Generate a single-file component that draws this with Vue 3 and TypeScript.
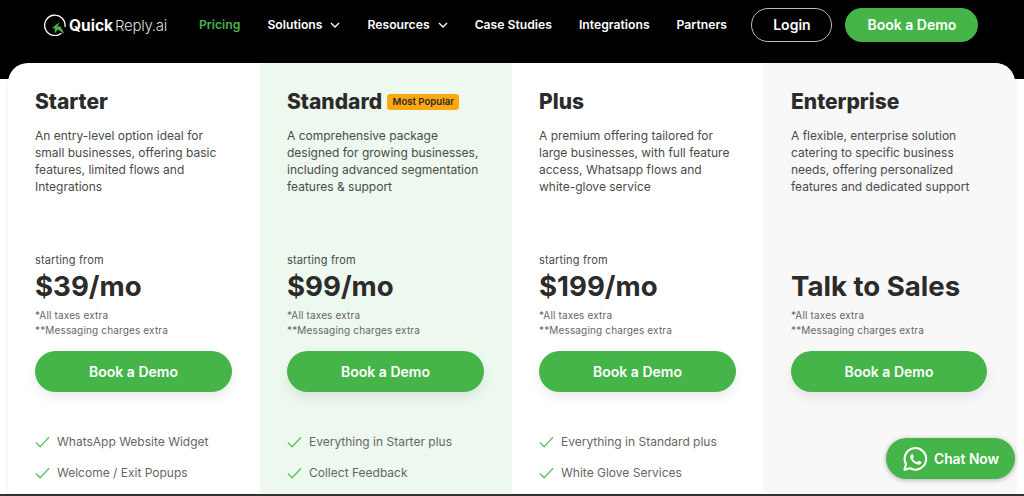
<script setup lang="ts">
interface Plan {
  name: string
  desc: string[]
  from: boolean
  price: string
  features: string[]
  tone: string
  badge?: string
}

const plans: Plan[] = [
  {
    name: 'Starter',
    desc: ['An entry-level option ideal for', 'small businesses, offering basic', 'features, limited flows and', 'Integrations'],
    from: true,
    price: '$39/mo',
    features: ['WhatsApp Website Widget', 'Welcome / Exit Popups'],
    tone: 'white',
  },
  {
    name: 'Standard',
    badge: 'Most Popular',
    desc: ['A comprehensive package', 'designed for growing businesses,', 'including advanced segmentation', 'features & support'],
    from: true,
    price: '$99/mo',
    features: ['Everything in Starter plus', 'Collect Feedback'],
    tone: 'green',
  },
  {
    name: 'Plus',
    desc: ['A premium offering tailored for', 'large businesses, with full feature', 'access, Whatsapp flows and', 'white-glove service'],
    from: true,
    price: '$199/mo',
    features: ['Everything in Standard plus', 'White Glove Services'],
    tone: 'white',
  },
  {
    name: 'Enterprise',
    desc: ['A flexible, enterprise solution', 'catering to specific business', 'needs, offering personalized', 'features and dedicated support'],
    from: false,
    price: 'Talk to Sales',
    features: [],
    tone: 'grey',
  },
]

const navItems = [
  { label: 'Pricing', active: true },
  { label: 'Solutions', caret: true },
  { label: 'Resources', caret: true },
  { label: 'Case Studies' },
  { label: 'Integrations' },
  { label: 'Partners' },
]
</script>

<template>
  <div class="page">
    <header class="topbar">
      <div class="logo">
        <svg class="logo-mark" viewBox="0 0 22 22" width="22" height="22">
          <path d="M17 19.500A10.200 10.200 0 1 1 21 12.500" fill="none" stroke="#fff" stroke-width="1.300" stroke-linecap="round" />
          <path d="M15.500 8 L8 14 L11 14.500 L10.500 19.500 L14 15.500 L20.500 20 L16.500 12.500 L13.500 12.500 Z" fill="#46b549" />
        </svg>
        <span class="logo-bold">Quick</span><span class="logo-light">Reply.ai</span>
      </div>
      <nav class="nav">
        <a v-for="item in navItems" :key="item.label" class="nav-item" :class="{ active: item.active }">
          {{ item.label }}
          <svg v-if="item.caret" class="caret" viewBox="0 0 10 6" width="10" height="6">
            <path d="M1 1l4 4 4-4" fill="none" stroke="#fff" stroke-width="1.300" />
          </svg>
        </a>
      </nav>
      <button class="login">Login</button>
      <button class="demo-top">Book a Demo</button>
    </header>

    <main class="pricing">
      <section v-for="plan in plans" :key="plan.name" class="plan" :class="plan.tone">
        <h2 class="plan-name">
          {{ plan.name }}
          <span v-if="plan.badge" class="badge">{{ plan.badge }}</span>
        </h2>
        <p class="desc">
          <span v-for="line in plan.desc" :key="line">{{ line }}</span>
        </p>
        <div class="from">{{ plan.from ? 'starting from' : '' }}</div>
        <div class="price">{{ plan.price }}</div>
        <div class="notes">
          <span>*All taxes extra</span>
          <span>**Messaging charges extra</span>
        </div>
        <button class="demo">Book a Demo</button>
        <ul class="features">
          <li v-for="f in plan.features" :key="f">
            <svg viewBox="0 0 16 12" width="15" height="12">
              <path d="M1 6.500l4.500 4.500L15 1" fill="none" stroke="#5cbf60" stroke-width="1.400" />
            </svg>
            {{ f }}
          </li>
        </ul>
      </section>
    </main>

    <div class="bottom-strip"></div>

    <button class="chat">
      <svg viewBox="0 0 28 28" width="26" height="26">
        <path d="M2.600 25.600l1.700-6.100A11.600 11.600 0 1 1 8.700 23.900Z" fill="none" stroke="#fff" stroke-width="2.200" stroke-linejoin="round" />
        <path d="M10.400 7.900c-.4 0-.9.1-1.300.6-.5.6-1.300 1.600-1.300 3.100 0 1.800 1.300 3.600 1.500 3.800.2.300 2.600 4.100 6.400 5.600 3.100 1.200 3.800 1 4.400.9.700-.1 2.200-.9 2.500-1.800.300-.8.300-1.600.2-1.700-.1-.2-.3-.3-.7-.5l-2.600-1.200c-.3-.1-.6-.2-.8.200l-1.200 1.500c-.2.200-.4.300-.8.100-.4-.2-1.600-.6-3.100-1.900-1.100-1-1.900-2.300-2.100-2.700-.2-.4 0-.6.200-.8l.6-.7c.2-.2.200-.4.400-.6.100-.3 0-.5 0-.7L11.900 8.800c-.3-.8-.7-.9-1.500-.9Z" fill="#fff" transform="translate(2.500 2.500) scale(.8)" />
      </svg>
      Chat Now
    </button>
  </div>
</template>

<style>
html,
body {
  margin: 0;
  background: #fff;
  overflow: hidden;
}
</style>

<style scoped>
.page {
  position: relative;
  width: 1024px;
  height: 496px;
  overflow: hidden;
  font-family: Inter, 'Liberation Sans', sans-serif;
  color: #2b2b2b;
}
.topbar {
  display: flex;
  align-items: flex-start;
  height: 79px;
  box-sizing: border-box;
  padding: 8px 0 0 44px;
  background: #000;
}
.logo {
  display: flex;
  align-items: center;
  width: 155px;
  height: 34px;
  font-size: 15.500px;
  color: #fff;
}
.logo-mark {
  margin-right: 3px;
}
.logo-bold {
  font-weight: 700;
  margin-right: 2px;
}
.logo-light {
  font-weight: 300;
  color: #ddd;
  font-size: 15px;
  letter-spacing: -0.3px;
}
.nav {
  display: flex;
  gap: 27px;
  height: 32px;
  align-items: center;
}
.nav-item {
  display: flex;
  align-items: center;
  gap: 8px;
  font-size: 12.200px;
  font-weight: 600;
  color: #fff;
  white-space: nowrap;
}
.nav-item.active {
  color: #46b549;
}
.caret {
  margin: 1px 0 0 0;
}
.login,
.demo-top {
  font-family: inherit;
  font-weight: 600;
  height: 34px;
  border-radius: 17px;
  color: #fff;
  font-size: 14px;
  padding: 0 0 2px;
}
.login {
  width: 81px;
  margin-left: 24.500px;
  background: transparent;
  border: 1px solid #bbb;
}
.demo-top {
  width: 133px;
  margin-left: 13px;
  background: #46b549;
  border: none;
}
.pricing {
  display: grid;
  grid-template-columns: 252px 252px 251px 252px;
  width: 1007px;
  height: 430px;
  margin: -16px 0 0 8px;
  border-radius: 20px 20px 0 0;
  overflow: hidden;
  background: #fff;
  box-shadow: 0 0 4px rgba(0, 0, 0, 0.08);
}
.plan {
  box-sizing: border-box;
  padding: 27px 27px 0;
}
.plan.green {
  background: #edf8ee;
}
.plan.grey {
  padding-left: 28px;
  background: #f8f8f8;
}
.plan-name {
  display: flex;
  align-items: center;
  gap: 5px;
  height: 24px;
  margin: 0;
  font-size: 21px;
  font-weight: 800;
  line-height: 24px;
}
.badge {
  padding: 2px 5.500px;
  border-radius: 3px;
  background: #ffa70f;
  font-size: 9.600px;
  font-weight: 600;
  line-height: 12px;
}
.desc {
  display: flex;
  flex-direction: column;
  height: 125px;
  margin: 13px 0 0;
  font-size: 12px;
  line-height: 17px;
  color: #4a4a4a;
  white-space: nowrap;
}
.from {
  height: 16px;
  font-size: 11px;
  line-height: 16px;
  letter-spacing: 0.15px;
  color: #4a4a4a;
}
.price {
  font-size: 27.600px;
  font-weight: 700;
  line-height: 36px;
}
.notes {
  display: flex;
  flex-direction: column;
  margin-top: 4px;
  font-size: 10px;
  line-height: 15px;
  letter-spacing: 0.15px;
  color: #666;
}
.demo {
  display: block;
  width: 197px;
  height: 41px;
  margin-top: 13px;
  border: none;
  border-radius: 21px;
  background: #46b549;
  box-shadow: 0 6px 12px rgba(0, 0, 0, 0.08);
  color: #fff;
  font-family: inherit;
  font-size: 14px;
  font-weight: 600;
  padding: 0 0 1px;
}
.grey .demo {
  width: 196px;
}
.features {
  margin: 34px 0 0;
  padding: 0;
  list-style: none;
}
.features li {
  display: flex;
  align-items: center;
  gap: 7px;
  height: 31px;
  font-size: 12px;
  color: #666;
  white-space: nowrap;
}
.bottom-strip {
  position: absolute;
  left: 0;
  right: 0;
  bottom: 0;
  height: 2px;
  background: #333;
}
.chat {
  position: absolute;
  left: 886px;
  top: 438px;
  display: flex;
  align-items: center;
  gap: 6px;
  width: 129px;
  height: 41px;
  padding: 0 0 0 16px;
  border: none;
  border-radius: 21px;
  background: #46b549;
  box-shadow: 0 1px 5px rgba(0, 0, 0, 0.3);
  color: #fff;
  font-family: inherit;
  font-size: 13.800px;
  font-weight: 600;
}
</style>
